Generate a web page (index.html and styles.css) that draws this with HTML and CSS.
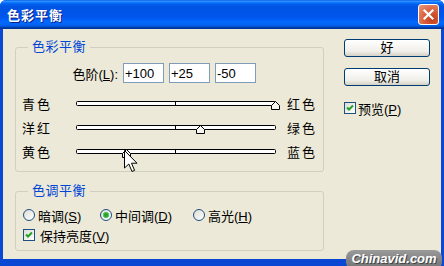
FILE: index.html
```html
<!DOCTYPE html>
<html lang="zh-CN">
<head>
  <meta charset="UTF-8" />
  <title>色彩平衡</title>
  <link rel="stylesheet" href="styles.css">
</head>
<body>
  <div class="window">
    <div class="titlebar">
      <span class="title">色彩平衡</span>
      <div class="close-btn">
        <svg viewBox="0 0 19 19" width="19" height="19">
          <path d="M5.5 5.5L13.5 13.5M13.5 5.5L5.5 13.5" stroke="#fff" stroke-width="2.2" stroke-linecap="square" />
        </svg>
      </div>
    </div>

    <div class="frame">
      <div class="left-col">
        <fieldset class="group balance">
          <legend>色彩平衡</legend>
          <div class="level-row">
            <span class="level-label">色阶(<u>L</u>):</span>
            <input class="level" value="+100">
            <input class="level" value="+25">
            <input class="level" value="-50">
          </div>

          <div class="slider-row first">
            <span class="side-label">青色</span>
            <svg class="slider" viewBox="0 0 200 24" width="200" height="24">
              <rect x="0.5" y="10.5" width="199" height="4" rx="1" fill="#fff" stroke="#000" />
              <line x1="99.5" y1="10" x2="99.5" y2="15" stroke="#000" />
              <path class="thumb" d="M199.5 10.5L203.5 14.5V18.5H195.5V14.5Z" />
            </svg>
            <span class="side-label right">红色</span>
          </div>
          <div class="slider-row">
            <span class="side-label">洋红</span>
            <svg class="slider" viewBox="0 0 200 24" width="200" height="24">
              <rect x="0.5" y="10.5" width="199" height="4" rx="1" fill="#fff" stroke="#000" />
              <line x1="99.5" y1="10" x2="99.5" y2="15" stroke="#000" />
              <path class="thumb" d="M124.5 10.5L128.5 14.5V18.5H120.5V14.5Z" />
            </svg>
            <span class="side-label right">绿色</span>
          </div>
          <div class="slider-row">
            <span class="side-label">黄色</span>
            <svg class="slider" viewBox="0 0 200 24" width="200" height="24">
              <rect x="0.5" y="10.5" width="199" height="4" rx="1" fill="#fff" stroke="#000" />
              <line x1="99.5" y1="10" x2="99.5" y2="15" stroke="#000" />
              <path class="thumb" d="M50.5 10.5L54.5 14.5V18.5H46.5V14.5Z" />
            </svg>
            <span class="side-label right">蓝色</span>
          </div>
        </fieldset>

        <fieldset class="group tone">
          <legend>色调平衡</legend>
          <div class="radio-row">
            <label class="opt shadows"><span class="radio"></span><span>暗调(<u>S</u>)</span></label>
            <label class="opt midtones"><span class="radio on"></span><span>中间调(<u>D</u>)</span></label>
            <label class="opt"><span class="radio"></span><span>高光(<u>H</u>)</span></label>
          </div>
          <div class="radio-row">
            <label class="opt keep">
              <span class="check">
                <svg viewBox="0 0 10 10" width="10" height="10"><path d="M2 4.5L4 6.5L8 2.5" fill="none" stroke="#21a121" stroke-width="2" /></svg>
              </span>
              <span>保持亮度(<u>V</u>)</span>
            </label>
          </div>
        </fieldset>
      </div>

      <div class="right-col">
        <div class="btn">好</div>
        <div class="btn">取消</div>
        <label class="preview">
          <span class="check">
            <svg viewBox="0 0 10 10" width="10" height="10"><path d="M2 4.5L4 6.5L8 2.5" fill="none" stroke="#21a121" stroke-width="2" /></svg>
          </span>
          <span>预览(<u>P</u>)</span>
        </label>
      </div>
    </div>

    <svg class="cursor" viewBox="0 0 14 23" width="14" height="23">
      <path d="M0.5 0.5V18L4.8 14L8 21.5L10.6 20.4L7.5 13.2H13Z" fill="#fff" stroke="#000" stroke-linejoin="round" />
    </svg>

    <div class="watermark">Chinavid.com</div>
  </div>
</body>
</html>
```

FILE: styles.css
```css
* { box-sizing: border-box; margin: 0; padding: 0; }

body {
  background: #fff;
  font-family: "Liberation Sans", "Noto Sans CJK SC", sans-serif;
  font-size: 13px;
  color: #000;
}

.window {
  position: relative;
  width: 444px;
  height: 266px;
  background: #0a48d4;
  border-radius: 6px 6px 0 0;
  overflow: hidden;
  display: flex;
  flex-direction: column;
}

.titlebar {
  height: 29px;
  display: flex;
  align-items: center;
  justify-content: space-between;
  padding: 0 5px 0 6px;
  background: linear-gradient(to bottom, #0058ee 0%, #3593ff 4%, #288eff 6%, #127dff 8%, #036ffc 10%, #0262ee 14%, #0057e5 20%, #0054e3 24%, #0055eb 56%, #005bf5 66%, #026afe 76%, #0062ef 86%, #0052d6 92%, #0040ab 94%, #003092 100%);
}

.title {
  color: #fff;
  font-weight: bold;
  font-size: 13px;
  letter-spacing: 1px;
  padding-left: 1px;
  text-shadow: 1px 1px 0 #0c1f86;
}

.close-btn {
  width: 21px;
  height: 21px;
  border: 1px solid #fff;
  border-radius: 3px;
  background: radial-gradient(circle at 70% 75%, #c23d1b 0%, #d9603d 45%, #eb9a7e 100%);
}

.frame {
  flex: 1;
  margin: 0 3px 7px;
  background: #ece9d8;
  display: flex;
  padding: 10px 0 0 12px;
}

.group {
  width: 309px;
  border: 1px solid #d0d0bf;
  border-radius: 3px;
  min-inline-size: 0;
}

.group legend {
  margin-left: 12px;
  padding: 0 4px;
  color: #0046d5;
  font-size: 13px;
  line-height: 16px;
  letter-spacing: 0.5px;
}

.balance {
  padding: 8px 0 8px;
}

.level-row {
  display: flex;
  align-items: center;
  gap: 5px;
  height: 20px;
  padding-left: 56px;
}

.level-label {
  width: 46px;
  text-align: right;
  white-space: nowrap;
}

.level {
  width: 41px;
  height: 20px;
  border: 1px solid #7f9db9;
  padding: 0 1px;
  font: inherit;
  color: #000;
  background: #fff;
}

.slider-row {
  display: flex;
  align-items: center;
  height: 24px;
  padding-left: 6px;
}

.slider-row.first {
  margin-top: 8px;
}

.side-label {
  width: 54px;
  letter-spacing: 2px;
  white-space: nowrap;
}

.side-label.right {
  width: auto;
  margin-left: 11px;
}

.slider {
  overflow: visible;
}

.thumb {
  fill: #f7f6f0;
  stroke: #000;
}

.tone {
  margin-top: 11px;
  padding: 6px 0 5px;
}

.radio-row {
  display: flex;
  align-items: center;
  height: 20px;
  padding-left: 7px;
}

.opt {
  display: flex;
  align-items: center;
  gap: 3px;
  white-space: nowrap;
}

.opt.shadows { width: 77px; }
.opt.midtones { width: 93px; }
.opt.keep { gap: 5px; }

.radio {
  width: 12px;
  height: 12px;
  border-radius: 50%;
  border: 1px solid #1c5180;
  background: linear-gradient(135deg, #dcdcd7, #fff);
}

.radio.on {
  background: radial-gradient(circle, #21a121 0, #2fae2f 2px, #7ccf7c 3px, transparent 3.5px), linear-gradient(135deg, #dcdcd7, #fff);
}

.check {
  width: 12px;
  height: 12px;
  border: 1px solid #1c5180;
  background: linear-gradient(135deg, #dcdcd7, #fff);
  display: flex;
  align-items: center;
  justify-content: center;
}

.right-col {
  margin-left: 20px;
  width: 86px;
  display: flex;
  flex-direction: column;
}

.btn {
  height: 18px;
  border: 1px solid #003c74;
  border-radius: 3px;
  background: linear-gradient(180deg, #fff 0%, #f0efe9 70%, #d6d0c5 100%);
  text-align: center;
  line-height: 16px;
}

.btn + .btn {
  margin-top: 11px;
}

.preview {
  margin-top: 12px;
  height: 20px;
  display: flex;
  align-items: center;
  gap: 2px;
  white-space: nowrap;
}

.cursor {
  position: absolute;
  left: 124px;
  top: 150px;
}

.watermark {
  position: absolute;
  left: 346px;
  top: 250px;
  width: 96px;
  height: 20px;
  border-radius: 8px;
  background: linear-gradient(180deg, #9a9a9a, #6f6f6f);
  color: #fff;
  font-family: "Liberation Sans", sans-serif;
  font-style: italic;
  font-weight: bold;
  font-size: 13px;
  line-height: 17px;
  text-align: center;
  text-shadow: 1px 1px 0 #444;
}
```
